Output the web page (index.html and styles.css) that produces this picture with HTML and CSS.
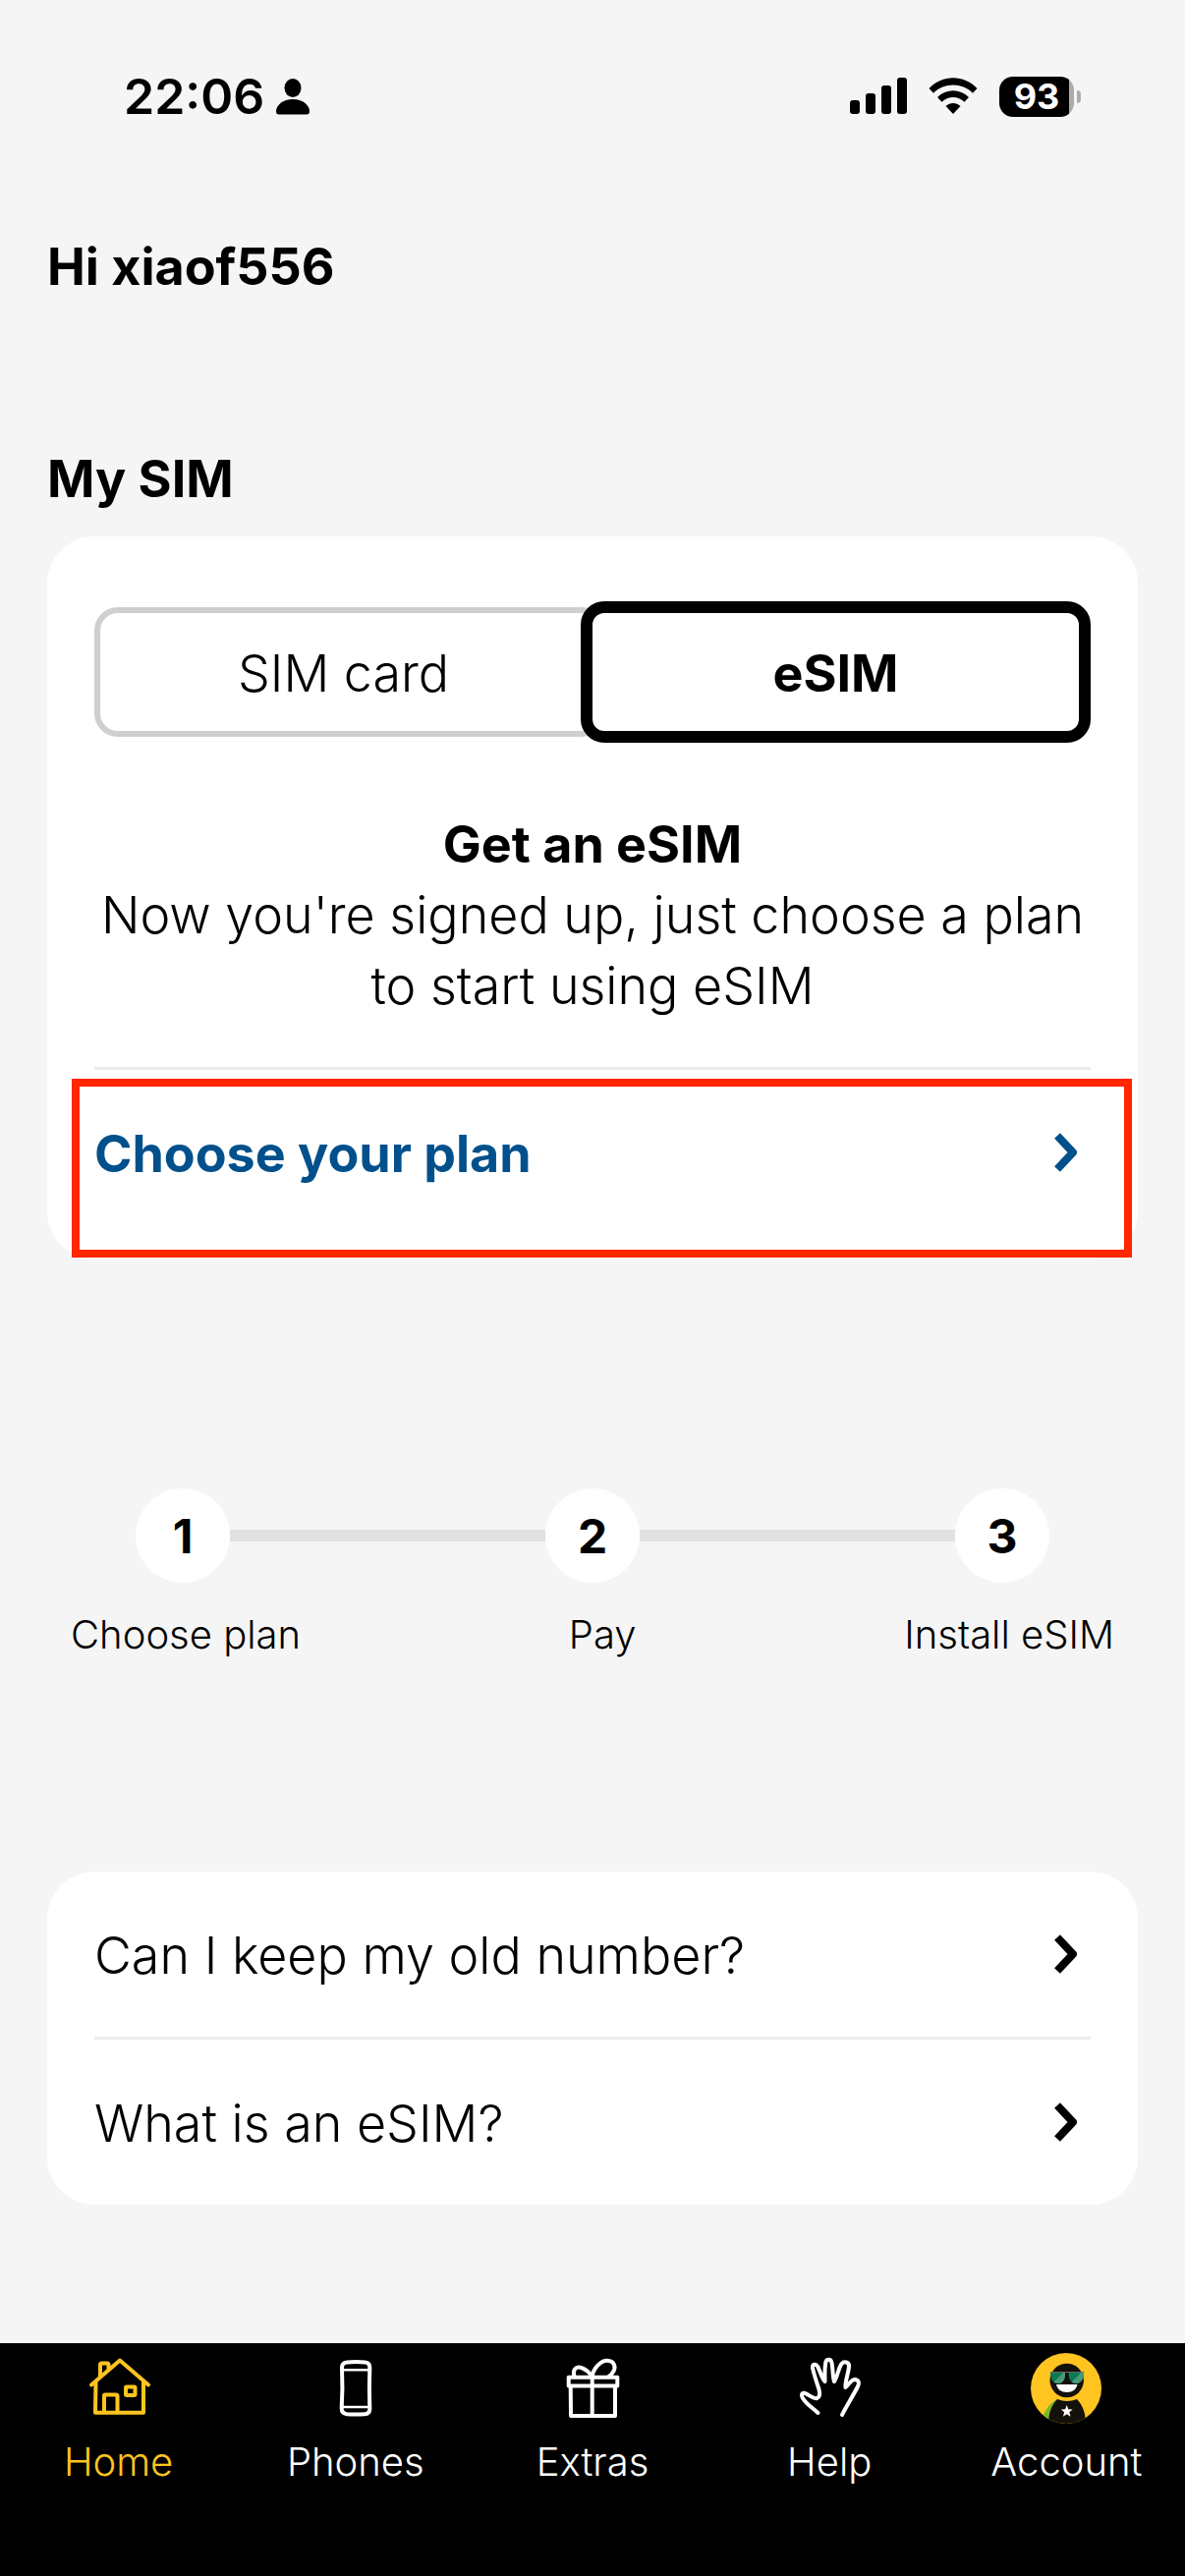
FILE: index.html
```html
<!DOCTYPE html>
<html lang="en">

<head>
  <meta charset="UTF-8">
  <meta name="viewport" content="width=device-width, initial-scale=1.0">
  <title>My SIM</title>
  <link rel="stylesheet" href="styles.css">
</head>

<body>
  <div class="status-bar">
    <div class="status-left">
      <span class="time">22:06</span>
      <svg width="34" height="37" viewBox="0 0 34 37">
        <ellipse cx="17" cy="9.500" rx="8.500" ry="9.500" />
        <path d="M3 36.500C1 36.500 0 35.500 0 33.500C0 27 7 21 17 21S34 27 34 33.500C34 35.500 33 36.500 31 36.500Z" />
      </svg>
    </div>
    <div class="status-right">
      <svg width="58" height="38" viewBox="0 0 58 38">
        <rect x="0" y="23" width="10" height="14" rx="3" />
        <rect x="16" y="16" width="10" height="21" rx="3" />
        <rect x="32" y="8" width="10" height="29" rx="3" />
        <rect x="48" y="0" width="10" height="37" rx="3" />
      </svg>
      <svg width="50" height="38" viewBox="0 0 50 38">
        <path d="M0.500 11C14 -3.300 36 -3.300 49.500 11L45 15.700C34 4.800 16 4.800 5 15.700Z" />
        <path d="M9 20C18 11 32 11 41 20L36.500 24.800C30 18.500 20 18.500 13.500 24.800Z" />
        <path d="M17.500 29C22 25 28 25 32.500 29L25 37Z" />
      </svg>
      <div class="battery"><span>93</span></div>
    </div>
  </div>

  <main class="content">
    <h1>Hi xiaof556</h1>

    <h2>My SIM</h2>
    <section class="card sim-card">
      <div class="toggle">
        <button class="toggle-option" type="button">SIM card</button>
        <button class="toggle-option selected" type="button">eSIM</button>
      </div>
      <div class="intro">
        <h3>Get an eSIM</h3>
        <p>Now you're signed up, just choose a plan to start using eSIM</p>
      </div>
      <a class="row plan-link" href="#">
        <span class="row-text">Choose your plan</span>
        <svg class="chevron" viewBox="0 0 28 42">
          <path d="M5 4L21 21L5 38" />
        </svg>
      </a>
      <div class="highlight"></div>
    </section>

    <section class="steps">
      <div class="step-track">
        <span class="step-number">1</span>
        <span class="step-line"></span>
        <span class="step-number">2</span>
        <span class="step-line"></span>
        <span class="step-number">3</span>
      </div>
      <div class="step-labels">
        <span>Choose plan</span>
        <span>Pay</span>
        <span>Install eSIM</span>
      </div>
    </section>

    <section class="card faq">
      <a class="row" href="#">
        <span class="row-text">Can I keep my old number?</span>
        <svg class="chevron" viewBox="0 0 28 42">
          <path d="M5 4L21 21L5 38" />
        </svg>
      </a>
      <a class="row" href="#">
        <span class="row-text">What is an eSIM?</span>
        <svg class="chevron" viewBox="0 0 28 42">
          <path d="M5 4L21 21L5 38" />
        </svg>
      </a>
    </section>
  </main>

  <nav class="tab-bar">
    <a class="tab active" href="#">
      <svg class="icon" viewBox="0 0 72 72">
        <path d="M8 32.500L37 7.500L66 32.500" />
        <path d="M12.500 30L12 60.700H61V30" />
        <path d="M17 24.500V12Q17 10.500 18.500 10.500H24Q25.500 10.500 25.500 12V17" />
        <path d="M21 60V43.500Q21 42.500 22 42.500H33Q34.500 42.500 34.500 44V60" />
        <rect x="43" y="34.500" width="9.500" height="8.500" rx="1" />
      </svg>
      <span>Home</span>
    </a>
    <a class="tab" href="#">
      <svg class="icon" viewBox="0 0 72 72">
        <path d="M27 9.500Q36 8.700 45.500 9.500Q50.500 10 50.300 15Q49.500 36 50.300 57Q50.300 62 45 62.200Q36 62.800 27 62.200Q21.700 61.500 21.700 56.500Q23 36 22 15Q22 10 27 9.500Z" />
        <path d="M23 17.300H50M22 55H50" stroke-width="2.500" />
      </svg>
      <span>Phones</span>
    </a>
    <a class="tab" href="#">
      <svg class="icon" viewBox="0 0 72 72">
        <rect x="11.700" y="24.700" width="49.600" height="8.800" />
        <path d="M13.700 34L14 64H59V34M35.700 24V64" />
        <path d="M35.500 23.500C29 15 21 12.500 18 16.500C16.500 18.500 16.500 21 17.500 24" />
        <path d="M35.700 23.500C37 15 45 7.500 51 7.700C58.500 8 60.500 15 56.500 20Q55 22.500 52.500 24" />
      </svg>
      <span>Extras</span>
    </a>
    <a class="tab" href="#">
      <svg class="icon hand" viewBox="0 0 72 72">
        <path d="M24.500 61C17 54 11 51 8.500 45C7 41 9.500 40 12.500 41.500C17 44 20 47 23.500 46C26.500 45 26.500 41 25.500 37C23 29 20 21 19 15C18.700 11 22.500 11 24 13.500C27 19 28 25 31.500 29C31.500 22 31 15 32.500 9C33.500 5.500 37.500 6.500 38.200 9C40 15 39 23 41 29C44.500 24 45 16 48.500 11C51 8 56.500 9 56 14C55.500 21 52 28 52.500 35C56.500 32 58 26.500 62.500 27C66.500 28 66.500 31 65 34C60 44 54 53 49 63" />
      </svg>
      <span>Help</span>
    </a>
    <a class="tab" href="#">
      <svg class="avatar" viewBox="0 0 72 72">
        <defs>
          <clipPath id="badge">
            <circle cx="36" cy="36" r="36" />
          </clipPath>
        </defs>
        <g clip-path="url(#badge)">
          <rect width="72" height="72" fill="#ffc420" />
          <path d="M27 47C19 51 14 59 12 66L18 72L24 60Z" fill="#78b82a" />
          <path d="M27 47Q37 51 47 47C53 53 56 62 56 72H18C18 62 21 53 27 47Z" fill="#14100a" />
          <circle cx="36.700" cy="28" r="17.200" fill="#14100a" />
          <path d="M20 20H35C35.500 26 33 31 28 31C23 31 20 27 20 20ZM38.500 20H54C54 27 51 31 46 31C41 31 38 26 38.500 20Z" fill="#0b7a54" />
          <path d="M23 30L33 20H35C35.500 26 33 31 28 31ZM41.500 30L51 20H54C54 27 51 31 46 31Z" fill="#48997a" />
          <path d="M20 19.500H54" stroke="#6b675f" />
          <path d="M26 32H47.500C46.500 37 42.500 40 36.800 40S27 37 26 32Z" fill="#fff" />
          <path d="M36.700 53L38.300 57.300L42.700 57.500L39.300 60.300L40.500 64.800L36.700 62.200L32.900 64.800L34.100 60.300L30.700 57.500L35.100 57.300Z" fill="#fff" />
        </g>
      </svg>
      <span>Account</span>
    </a>
  </nav>
</body>

</html>
```
FILE: styles.css
```css
* {
  box-sizing: border-box;
}

body {
  margin: 0;
  min-height: 100vh;
  display: flex;
  flex-direction: column;
  background-color: #f5f5f5;
  color: #000;
  font-family: Inter, "Liberation Sans", sans-serif;
  font-size: 52px;
  font-weight: 300;
  line-height: 72px;
}

h1,
h2,
h3,
p {
  margin: 0;
}

h1,
h2,
h3 {
  font-size: 52px;
  font-weight: 700;
}

a {
  color: inherit;
  text-decoration: none;
}

/* Status bar */
.status-bar {
  height: 196px;
  padding: 0 106px 0 126px;
  display: flex;
  align-items: center;
  justify-content: space-between;
}

.status-left {
  display: flex;
  align-items: center;
  gap: 12px;
}

.time {
  font-size: 50px;
  font-weight: 600;
}

.status-right {
  display: flex;
  align-items: center;
  gap: 22px;
}

.battery {
  position: relative;
  width: 76px;
  height: 41px;
  margin-right: 7px;
  border-radius: 14px;
  background: linear-gradient(to right, #000 93%, #acacac 93%);
  color: #fff;
  font-size: 36px;
  font-weight: 700;
  line-height: 41px;
  text-align: center;
}

.battery::after {
  content: "";
  position: absolute;
  right: -7px;
  top: 14px;
  width: 4px;
  height: 13px;
  border-radius: 0 4px 4px 0;
  background-color: #acacac;
}

.content {
  padding: 40px 48px;
}

.card {
  background-color: #fff;
  border-radius: 48px;
  padding: 0 48px;
}

/* SIM card */
.sim-card {
  position: relative;
  margin-top: 22px;
  padding-top: 66px;
  padding-bottom: 24px;
}

h2 {
  margin-top: 144px;
}

.toggle {
  display: flex;
  align-items: center;
}

.toggle-option {
  flex: 1;
  height: 132px;
  padding: 4px 12px 0 0;
  border: 6px solid #cfcfcf;
  border-radius: 24px;
  background-color: #fff;
  color: #000;
  font: inherit;
  cursor: pointer;
}

.toggle-option.selected {
  z-index: 1;
  height: 144px;
  margin-left: -24px;
  padding: 4px 0 0;
  border: 12px solid #000;
  font-weight: 700;
}

.intro {
  padding: 68px 0 46px;
  border-bottom: 3px solid #ebebeb;
  text-align: center;
}

.row {
  height: 168px;
  display: flex;
  align-items: center;
  justify-content: space-between;
}

.row-text {
  padding-top: 4px;
}

.plan-link {
  color: #00508c;
  font-weight: 700;
}

.chevron {
  width: 28px;
  height: 42px;
  margin-right: 11px;
  fill: none;
  stroke: currentColor;
  stroke-width: 8;
  stroke-linejoin: round;
}

.highlight {
  position: absolute;
  left: 25px;
  right: 6px;
  bottom: 1px;
  height: 182px;
  border: 8px solid #ff2600;
  pointer-events: none;
}

/* Steps */
.steps {
  margin-top: 234px;
  padding: 0 24px;
}

.step-track {
  display: flex;
  align-items: center;
  padding: 0 66px;
}

.step-number {
  width: 96px;
  height: 96px;
  border-radius: 50%;
  background-color: #fff;
  font-size: 48px;
  font-weight: 700;
  line-height: 98px;
  text-align: center;
}

.step-line {
  flex: 1;
  height: 12px;
  background-color: #e2e2e2;
}

.step-labels {
  display: flex;
  justify-content: space-between;
  margin-top: 29px;
  font-size: 40px;
  line-height: 48px;
}

/* FAQ */
.faq {
  margin-top: 217px;
}

.faq .row + .row {
  border-top: 3px solid #ebebeb;
  height: 171px;
}

/* Tab bar */
.tab-bar {
  margin-top: auto;
  padding: 10px 0 92px;
  display: flex;
  background-color: #000;
  color: #fff;
  font-size: 40px;
  line-height: 48px;
}

.tab {
  flex: 1;
  display: flex;
  flex-direction: column;
  align-items: center;
  gap: 15px;
}

.tab.active {
  color: #ffc420;
}

.icon,
.avatar {
  width: 72px;
  height: 72px;
}

.icon {
  fill: none;
  stroke: currentColor;
  stroke-width: 4;
  stroke-linecap: round;
  stroke-linejoin: round;
}
```
